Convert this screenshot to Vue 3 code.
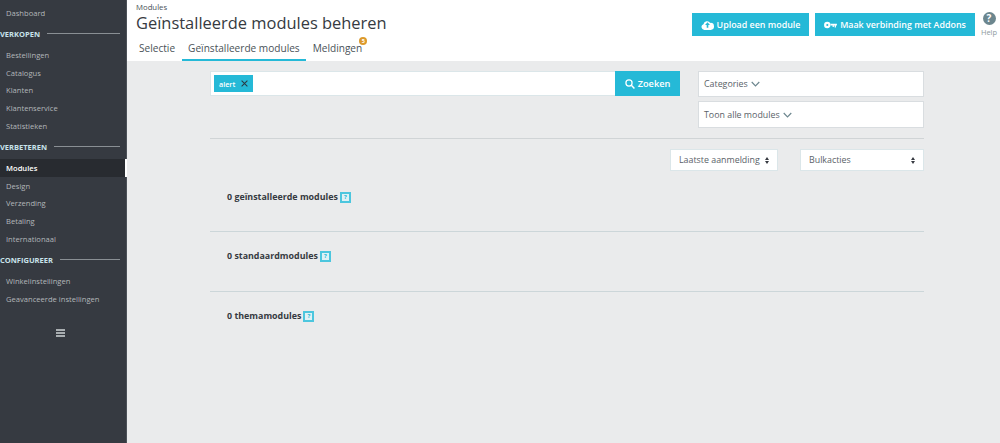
<script setup>
const groups = [
  { items: ['Dashboard'] },
  { title: 'VERKOPEN', items: ['Bestellingen', 'Catalogus', 'Klanten', 'Klantenservice', 'Statistieken'] },
  { title: 'VERBETEREN', items: ['Modules', 'Design', 'Verzending', 'Betaling', 'Internationaal'] },
  { title: 'CONFIGUREER', items: ['Winkelinstellingen', 'Geavanceerde instellingen'] }
]
const sections = ['0 geïnstalleerde modules', '0 standaardmodules', '0 themamodules']
</script>

<template>
  <div class="page">
    <aside class="side">
      <template v-for="g in groups" :key="g.title || 'top'">
        <div v-if="g.title" class="group"><span>{{ g.title }}</span><i></i></div>
        <a v-for="it in g.items" :key="it" class="item" :class="{ active: it === 'Modules' }">{{ it }}</a>
      </template>
      <div class="burger"><i></i><i></i><i></i></div>
    </aside>
    <main class="main">
      <header class="head">
        <div class="head-top">
          <div class="titles">
            <div class="crumb">Modules</div>
            <h1>Geïnstalleerde modules beheren</h1>
          </div>
          <div class="actions">
            <button class="btn">
              <svg width="13" height="10" viewBox="0 0 16 12"><path fill="#fff" d="M4 12a3.600 3.600 0 0 1-1-7A4.600 4.600 0 0 1 11.400 3.400 4.300 4.300 0 0 1 12 12z"/><path fill="#25b9d7" d="M8 2.600 11 6H9v3.400H7V6H5z"/></svg>
              Upload een module
            </button>
            <button class="btn">
              <svg width="13" height="8" viewBox="0 0 16 10"><path fill="#fff" fill-rule="evenodd" d="M4 1a4 4 0 1 1-.1 8A4 4 0 0 1 4 1zm0 2.700a1.300 1.300 0 1 0 0 2.600 1.300 1.300 0 0 0 0-2.600zM7.500 3.500H16v2.200h-1.200V8h-1.600V5.700h-1v1.800h-1.600V5.700H7.500z"/></svg>
              Maak verbinding met Addons
            </button>
            <div class="help">
              <span class="help-ico">?</span>
              <span class="help-txt">Help</span>
            </div>
          </div>
        </div>
        <nav class="tabs">
          <a class="tab">Selectie</a>
          <a class="tab on">Geïnstalleerde modules</a>
          <a class="tab badge-tab">Meldingen<b class="badge">5</b></a>
        </nav>
      </header>
      <section class="content">
        <div class="filters">
          <div class="search">
            <div class="field">
              <span class="tag">alert
                <svg width="7" height="7" viewBox="0 0 8 8"><path d="M.7.7l6.600 6.600M7.300.7.700 7.300" stroke="#2b3a44" stroke-width="1.200" fill="none"/></svg>
              </span>
            </div>
            <button class="go">
              <svg width="10" height="10" viewBox="0 0 12 12"><circle cx="4.800" cy="4.800" r="3.700" fill="none" stroke="#fff" stroke-width="1.500"/><path d="M7.600 7.600 11.300 11.300" stroke="#fff" stroke-width="1.800"/></svg>
              Zoeken
            </button>
          </div>
          <div class="drops">
            <div class="drop">Categories
              <svg width="9" height="6" viewBox="0 0 10 6"><path d="M.8.8 5 5 9.200.8" fill="none" stroke="#6c868e" stroke-width="1.300"/></svg>
            </div>
            <div class="drop tall">Toon alle modules
              <svg width="9" height="6" viewBox="0 0 10 6"><path d="M.8.8 5 5 9.200.8" fill="none" stroke="#6c868e" stroke-width="1.300"/></svg>
            </div>
          </div>
        </div>
        <div class="sorts">
          <div class="sel s1">Laatste aanmelding<span class="car"><i class="up"></i><i class="dn"></i></span></div>
          <div class="sel s2">Bulkacties<span class="car"><i class="up"></i><i class="dn"></i></span></div>
        </div>
        <div v-for="s in sections" :key="s" class="sec">
          <strong>{{ s }}</strong><span class="q">?</span>
        </div>
      </section>
    </main>
  </div>
</template>

<style>
html, body { margin: 0; padding: 0; }
</style>

<style scoped>
.page { display: flex; width: 1000px; height: 443px; overflow: hidden; font-family: "Open Sans", sans-serif; background: #eaebec; color: #363a41; }
.side { flex: 0 0 127px; box-sizing: border-box; background: #363a41; border-right: 1px solid #4d5259; padding-top: 4px; }
.item { display: block; height: 17.750px; line-height: 18.500px; padding-left: 6px; font-size: 7.600px; color: #b3b7ba; white-space: nowrap; }
.item.active { position: relative; background: #282b30; color: #fff; font-weight: 600; margin-right: -1px; border-right: 2px solid #fff; }
.group { display: flex; align-items: center; height: 17px; margin: 3.600px 0; padding-right: 6px; font-size: 7.500px; font-weight: 700; color: #c9e3ea; }
.group i { flex: 1; height: 1px; background: #8a8f94; margin-left: 7px; }
.burger { width: 9px; margin: 22px 0 0 56px; display: flex; flex-direction: column; gap: 1px; }
.burger i { display: block; height: 2px; background: #a9aeb1; }
.main { flex: 1; min-width: 0; }
.head { background: #fff; height: 61px; box-sizing: border-box; padding-left: 9px; display: flex; flex-direction: column; }
.head-top { display: flex; justify-content: space-between; height: 39px; }
.crumb { font-size: 7.750px; line-height: 10px; margin-top: 2px; color: #4a5258; }
h1 { margin: 0; font-size: 16.450px; font-weight: 400; line-height: 22px; color: #363a41; white-space: nowrap; }
.actions { display: flex; align-items: flex-start; padding-top: 13px; }
.btn { display: flex; align-items: center; justify-content: center; gap: 3px; height: 23px; padding: 0; border: 0; background: #25b9d7; color: #fff; font: 600 8.900px "Open Sans", sans-serif; white-space: nowrap; }
.btn:nth-child(1) { width: 117px; margin-right: 6px; }
.btn:nth-child(2) { width: 160px; }
.help { width: 22px; margin-left: 3px; display: flex; flex-direction: column; align-items: center; margin-top: -1px; }
.help-ico { width: 13px; height: 13px; border-radius: 50%; background: #6c868e; color: #fff; font: 700 10px/13px "Open Sans", sans-serif; text-align: center; }
.help-txt { font-size: 7.500px; line-height: 11px; color: #8e9ba1; margin-top: 2px; }
.tabs { display: flex; gap: 1px; height: 22px; margin-left: -3px; }
.tab { padding: 0 6px; font-size: 10.100px; line-height: 18px; height: 22px; box-sizing: border-box; color: #4a5258; white-space: nowrap; }
.tab.on { border-bottom: 2px solid #25b9d7; }
.badge-tab { position: relative; }
.badge { position: absolute; top: -2px; right: 1px; width: 8px; height: 8px; border-radius: 50%; background: #dc9a2c; color: #fff; font: 700 5.500px/8px "Open Sans", sans-serif; text-align: center; }
.content { padding: 10px 76px 0 83px; }
.filters { display: flex; justify-content: space-between; align-items: flex-start; padding-bottom: 10px; border-bottom: 1px solid #d0d4d6; }
.search { display: flex; width: 470px; height: 25px; }
.field { flex: 1; display: flex; align-items: center; background: #fff; border: 1px solid #dbe6e9; border-right: 0; box-sizing: border-box; padding: 0 3px; }
.tag { display: inline-flex; align-items: center; gap: 6px; height: 17px; padding: 0 5px; background: #25b9d7; color: #fff; font-size: 7.200px; font-weight: 600; box-sizing: border-box; }
.go { width: 65px; border: 0; padding: 0; background: #25b9d7; color: #fff; font: 600 9.200px "Open Sans", sans-serif; display: flex; align-items: center; justify-content: center; gap: 3px; }
.drops { display: flex; flex-direction: column; gap: 4px; width: 226px; }
.drop { height: 26px; box-sizing: border-box; background: #fff; border: 1px solid #d9dde0; padding-left: 5px; display: flex; align-items: center; gap: 3px; font-size: 8.850px; color: #5a6268; }
.drop.tall { height: 27px; }
.sorts { display: flex; justify-content: flex-end; gap: 22px; margin-top: 10px; margin-bottom: 2px; }
.sel { height: 22px; box-sizing: border-box; background: #fff; border: 1px solid #dbe6e9; display: flex; align-items: center; justify-content: space-between; padding: 0 8px; font-size: 8.850px; color: #5a6268; white-space: nowrap; }
.s1 { width: 108px; }
.s2 { width: 124px; }
.car { display: flex; flex-direction: column; gap: 1px; }
.car i { width: 0; height: 0; border-left: 2.500px solid transparent; border-right: 2.500px solid transparent; }
.car .up { border-bottom: 3px solid #363a41; }
.car .dn { border-top: 3px solid #363a41; }
.sec { height: 59px; box-sizing: border-box; padding: 17px 0 0 17px; border-bottom: 1px solid #ccd6d9; display: flex; align-items: flex-start; gap: 2px; }
.sec:nth-last-child(2) { height: 60px; }
.sec:last-child { border-bottom: 0; }
.sec strong { font-size: 8.900px; line-height: 14px; font-weight: 700; color: #363a41; white-space: nowrap; }
.q { box-sizing: border-box; width: 11px; height: 11px; margin-top: 2px; border: 2px solid #4cc6de; background: #dff1f5; color: #25b9d7; font: 700 6px/7px "Open Sans", sans-serif; text-align: center; }
</style>
